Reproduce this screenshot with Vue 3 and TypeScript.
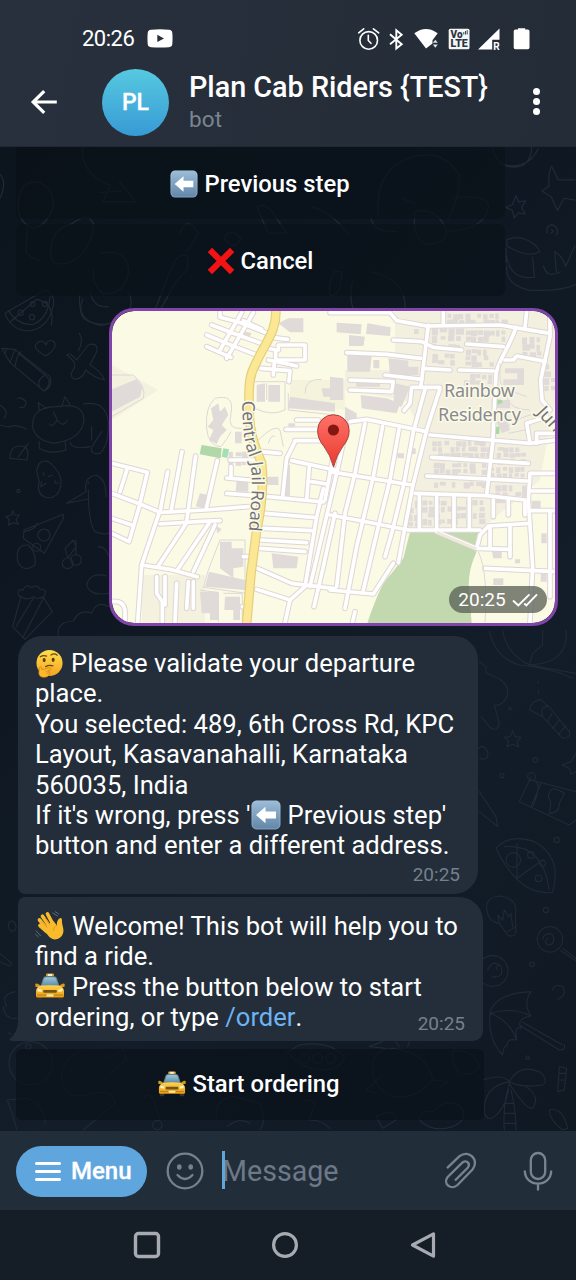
<script setup lang="ts">
interface Box { x: number; y: number; w: number; h: number }

// West half of the map, drawn at three units per pixel
const westRoads: string[] = [
  'M320 75L385 100L468 130', 'M305 105L375 134L455 165', 'M305 140L378 172', 'M345 38V52L400 66L495 103',
  'M445 38L365 175', 'M410 38L345 150', 'M415 62L470 88',
  'M470 140L512 150V180H600V135H520V150', 'M500 112L548 118', 'M468 205L555 212L552 245M490 180L575 198M508 188L505 225',
  'M20 490L127 517L105 610', 'M67 505L45 575', 'M20 580L105 612L165 637L300 630L430 620', 'M105 612L72 725L20 700',
  'M20 655L80 675', 'M162 640L110 795L98 968', 'M110 795L195 808L277 830', 'M345 662L290 664L165 672', 'M188 515L165 635',
  'M231 455L198 635', 'M272 468L245 665', 'M337 482L303 628', 'M247 665L158 800', 'M312 670L217 810', 'M330 675L265 815',
  'M375 480H470', 'M365 534L435 540', 'M365 580L490 590L655 606', 'M470 455L525 460', 'M575 360H640', 'M543 388H640',
  'M570 425L545 475L533 590', 'M570 422H650', 'M560 482L690 510', 'M613 500L605 598', 'M620 545L665 552', 'M690 440L660 600',
  'M480 640L625 652', 'M475 685L620 692', 'M468 720L605 728', 'M465 745L600 755', 'M458 805L560 850L690 866', 'M455 868L555 900',
  'M655 566L635 650L600 860L555 900L540 968', 'M690 640L655 800L627 920', 'M155 830V880L172 905V965', 'M180 830V915', 'M215 850L210 965',
  'M250 845L245 925', 'M265 845V925', 'M378 500V530', 'M415 770H430', 'M412 920H425', 'M20 905Q55 900 60 930V968',
]
// East half of the map
const eastRoads: string[] = [
  'M0 38H180L200 62L290 78L510 75L660 100', 'M340 35V70', 'M295 75L275 240', 'M558 82C535 150 510 170 498 220L488 430L470 585',
  'M190 120L275 125L310 142L395 150', 'M50 158L170 163L272 175', 'M280 205L360 210', 'M410 132L520 140', 'M388 210L490 213',
  'M165 225L275 238L272 262', 'M60 240L190 245L185 275L60 270', 'M590 35L585 80', 'M660 50V110L632 240L636 300L660 330',
  'M525 180H550L560 168L645 184', 'M222 332L240 310L245 262H330', 'M285 268L250 395',
  'M330 265L290 390L248 560L205 788', 'M60 365L110 358L290 395', 'M50 380L20 520L-60 860', 'M105 370L75 520L45 640L20 860',
  'M158 378L130 530L80 740L45 925', 'M207 388L180 540L145 680L100 870', 'M250 395L222 550L185 700L165 770',
  'M0 515L245 555', 'M0 645L80 660L235 690', 'M235 690H450', 'M0 870L130 882L190 790', 'M300 405L480 420L600 430L680 420',
  'M305 472L595 490', 'M290 528L590 543', 'M255 580L470 587L585 600V645', 'M268 585V685', 'M320 590V685', 'M372 590V685', 'M418 592V685',
  'M490 600V650', 'M535 600V645', 'M320 695L440 745L540 748', 'M440 745L450 705L475 678L600 670', 'M540 680V770', 'M480 680V740',
  'M600 430L595 400L590 370L650 350', 'M680 520H600L595 600L608 800L600 968', 'M600 573H680', 'M600 632H680', 'M465 805L680 815', 'M660 635V890',
  'M620 430V400H680', 'M75 935L68 965',
]
const westBlocks: string[] = [
  'M20 268L95 238L112 262L105 290L20 335Z', 'M550 55H595V97H555L520 70Z', 'M405 90L440 100L428 118L402 108Z', 'M455 255L480 250V305H455Z', 'M490 255H525V305H490Z',
  'M555 290L690 310V335L550 325Z', 'M345 725H380V745H415V800L385 805V835L345 805Z', 'M312 815L420 840V870L300 860Z', 'M285 875H340V960H315V940H290Z', 'M360 890H405V960H385V930H358Z',
  'M500 760L580 770L575 805H505Z', 'M285 580L310 585L295 625L272 618Z', 'M395 540H430V575H392Z', 'M318 325L340 310L345 335L360 320L370 345L350 375L365 390L345 410L335 432L312 420L325 390L308 380L325 360Z',
  'M390 395H410V430H390Z', 'M650 265H690V290H655Z', 'M330 675L350 688L338 700Z', 'M535 495H555V590H540Z', 'M455 530H520V555H460Z', 'M550 370H570V380H550Z',
]
const eastBlocks: string[] = [
  'M20 68L95 73L92 103L20 97Z', 'M112 70L182 82L180 108L108 102Z', 'M57 105L105 110L100 138H57Z', 'M52 165L125 168L120 215H52Z',
  'M130 180H148V205H130Z', 'M175 175L235 182V200H265V225H180Z', 'M0 230L40 235V300H0Z', 'M75 240L150 245V260H80Z', 'M92 285L170 295L210 310L200 340L95 325Z',
  'M195 250L240 260L215 320L190 315Z', 'M45 320L80 340V365H45Z', 'M525 205H582V255H520V238H562V220H525Z', 'M495 590H525V610H495Z',
  'M605 602H632V628H605Z', 'M634 700H650V730H634Z', 'M485 750H515V775H490Z', 'M555 778H570V790H555Z', 'M632 822H650V845H632Z', 'M490 835H520V855H490Z',
  'M200 460H222V475H203Z', 'M243 445H257V462H243Z', 'M252 88H266V102H252Z', 'M500 365L530 360L540 390L515 400Z', 'M485 300H540V325H485Z',
]

function scatter(seed: number, area: Box, step: number): Box[] {
  let s = seed * 7919
  const next = (): number => { s = (s * 16807) % 2147483647; return s / 2147483647 }
  const out: Box[] = []
  for (let y = area.y; y < area.y + area.h; y += step) {
    for (let x = area.x; x < area.x + area.w; x += step) {
      if (next() < 0.12) continue
      out.push({ x: x + next() * 3, y: y + next() * 3, w: 10 + next() * (step - 9), h: 10 + next() * (step - 9) })
    }
  }
  return out
}
const houses: Box[] = [
  ...scatter(11, { x: 305, y: 84, w: 85, h: 50 }, 24), ...scatter(37, { x: 405, y: 90, w: 120, h: 36 }, 18),
  ...scatter(71, { x: 405, y: 148, w: 90, h: 54 }, 18), ...scatter(15, { x: 305, y: 160, w: 55, h: 36 }, 18),
  ...scatter(92, { x: 305, y: 422, w: 170, h: 40 }, 18), ...scatter(19, { x: 310, y: 488, w: 150, h: 34 }, 18),
  ...scatter(57, { x: 500, y: 440, w: 85, h: 40 }, 18), ...scatter(83, { x: 310, y: 545, w: 150, h: 18 }, 18),
  ...scatter(29, { x: 275, y: 600, w: 180, h: 74 }, 19), ...scatter(61, { x: 480, y: 500, w: 100, h: 34 }, 18),
  ...scatter(43, { x: 350, y: 40, w: 170, h: 22 }, 18), ...scatter(67, { x: 575, y: 110, w: 60, h: 50 }, 22),
  ...scatter(81, { x: 400, y: 222, w: 82, h: 20 }, 18), ...scatter(13, { x: 495, y: 555, w: 85, h: 30 }, 20),
  ...scatter(31, { x: 640, y: 190, w: 30, h: 70 }, 22), ...scatter(97, { x: 230, y: 600, w: 25, h: 70 }, 22),
]
const campus: Box[] = scatter(5, { x: 370, y: 455, w: 60, h: 40 }, 20)

const menuLines: number[] = [1, 2, 3]
</script>

<template>
  <div class="phone">
    <svg class="defs" width="0" height="0" aria-hidden="true">
      <defs>
        <linearGradient id="gKey" x1="0" y1="0" x2="0" y2="1"><stop offset="0" stop-color="#9dbdd7" /><stop offset="1" stop-color="#6285a8" /></linearGradient>
        <linearGradient id="gFace" x1="0" y1="0" x2="0" y2="1"><stop offset="0" stop-color="#fee04a" /><stop offset="1" stop-color="#f6a420" /></linearGradient>
        <linearGradient id="gCab" x1="0" y1="0" x2="0" y2="1"><stop offset="0" stop-color="#ffd44c" /><stop offset="1" stop-color="#e89c0c" /></linearGradient>
        <linearGradient id="gGlass" x1="0" y1="0" x2="0" y2="1"><stop offset="0" stop-color="#9fc4d6" /><stop offset="1" stop-color="#568ba9" /></linearGradient>
        <linearGradient id="gPin" x1="0" y1="0" x2="0" y2="1"><stop offset="0" stop-color="#ff7268" /><stop offset="1" stop-color="#e9392f" /></linearGradient>
        <symbol id="eLeft" viewBox="0 0 30 30">
          <rect x=".5" y=".5" width="29" height="29" rx="5" fill="url(#gKey)" />
          <rect x="1.2" y="1.2" width="27.6" height="27.6" rx="4.5" fill="none" stroke="#adc7dc" stroke-opacity=".35" />
          <path d="M5 15L14.5 6.7V11.5H25V18.5H14.5V23.3Z" fill="#fff" />
        </symbol>
        <symbol id="eCross" viewBox="0 0 30 30"><path d="M.8 5.6L5.4 .8L15 10.4L24.6 .8L29.2 5.6L19.6 15L29.2 24.4L24.6 29.2L15 19.6L5.4 29.2L.8 24.4L10.4 15Z" fill="#f21414" /></symbol>
        <symbol id="eThink" viewBox="0 0 30 30">
          <circle cx="15" cy="14.5" r="13.5" fill="url(#gFace)" />
          <ellipse cx="9.5" cy="11.4" rx="1.6" ry="2.2" fill="#5c3a12" /><ellipse cx="18.8" cy="11.2" rx="1.6" ry="2.2" fill="#5c3a12" />
          <path d="M5.5 8Q8.5 6 12 7.3M16.5 6.2Q20 4 23 6.4M11 18.2Q15 16.3 18.5 17.5" fill="none" stroke="#6b4213" stroke-width="1.3" stroke-linecap="round" />
          <path d="M4.5 19.5C5 17.8 6.8 18 6.8 20L7 21.5L14.5 19.5C17 19 17.5 21 15.5 21.8L13.5 22.5C16 23 15.5 28 11.5 29C7 30.2 3.5 28 4 24Z" fill="#fbb92b" stroke="#c97c16" stroke-width=".7" />
          <path d="M14 22.3L11 23.5M14.5 24.5L11.5 25.2" stroke="#c97c16" stroke-width=".7" />
        </symbol>
        <symbol id="eWave" viewBox="0 0 30 30">
          <g fill="none" stroke="#f9bb2b" stroke-width="3.7" stroke-linecap="round"><path d="M15 16L7.5 5.3" /><path d="M18 13.5L12.5 3" /><path d="M12.5 18L4.5 9" /><path d="M11.8 20.5L5 14.5" /></g>
          <path d="M9.5 16L18.2 9.8L22 14.5C21.5 11.5 22.5 8.2 25.2 7C27.2 6.8 27 9 27 11C27 14 29.5 18.5 28 22.5C26.5 27 21.5 29.5 17.5 28C13 26 10 20.5 9.5 16Z" fill="#f9bb2b" />
          <path d="M15 14L10 6.8M12.2 16.5L6.5 9.8M22 14.5C19 15.5 18 18 19 20" fill="none" stroke="#dd8f1a" stroke-width=".8" />
          <path d="M17.5 1.8L22.8 5.2M20 .5L24 3.2M.8 19.5L5.8 25M.3 23L3.5 26" fill="none" stroke="#687886" stroke-width=".8" />
        </symbol>
        <symbol id="eCab" viewBox="0 0 30 30">
          <rect x="11" y="1.5" width="8" height="3" rx="1" fill="#d5a23c" /><rect x="13" y="2" width="4" height="2" fill="#f4eedb" />
          <rect x="1.8" y="22" width="5" height="6.2" rx="1.5" fill="#30343a" /><rect x="23.2" y="22" width="5" height="6.2" rx="1.5" fill="#30343a" />
          <path d="M5.6 14L8 6.2Q8.5 4.2 11 4.2H19Q21.5 4.2 22 6.2L24.4 14Z" fill="#5f7f8c" />
          <path d="M6.8 14L9 6.8Q9.4 5.3 11 5.3H19Q20.6 5.3 21 6.8L23.2 14Z" fill="url(#gGlass)" />
          <path d="M.2 12.8Q.3 11.4 2 11.6L5 13L4.5 15L.6 14.9ZM29.8 12.8Q29.7 11.4 28 11.6L25 13L25.5 15L29.4 14.9Z" fill="#d89819" />
          <path d="M5.5 13.6Q15 12.8 24.5 13.6Q28.8 15.5 29 19V24Q29 25.5 27.4 25.5H2.6Q1 25.5 1 24V19Q1.2 15.5 5.5 13.6Z" fill="url(#gCab)" />
          <rect x="8.2" y="18" width="13.6" height="2.8" rx="1" fill="#765219" /><path d="M2.6 16.6L6.8 17.8V20L2.6 19.2ZM27.4 16.6L23.2 17.8V20L27.4 19.2Z" fill="#f8f1d3" />
          <path d="M2 23H28" stroke="#a8731f" stroke-width=".8" /><rect x="11.5" y="22.2" width="7" height="2.2" rx=".5" fill="#fae8a4" />
        </symbol>
      </defs>
    </svg>

    <header class="header">
      <div class="status">
        <span class="clock">20:26</span>
        <svg class="yt" width="26" height="19" viewBox="0 0 26 19"><path d="M4 .8Q13 -.2 22 .8Q25.2 1.2 25.3 4Q25.8 9.5 25.3 15Q25.2 17.8 22 18.2Q13 19 4 18.2Q.8 17.8 .7 15Q.2 9.5 .7 4Q.8 1.2 4 .8Z" fill="#fff" /><path d="M10.3 5.8L17 9.4L10.3 13Z" fill="#28303c" /></svg>
        <svg class="tray" width="174" height="26" viewBox="0 0 174 26">
          <g fill="none" stroke="#fff" stroke-width="1.6" stroke-linecap="round"><circle cx="11.7" cy="14.4" r="8.8" /><path d="M11.3 9.3V14.5L14 17.3" /><path d="M1.7 6.8L6.7 2.8M16.4 2.8L21.7 6.8" /></g>
          <path d="M33 8.3L44.7 18.3L39.3 22.5V4.2L44.7 8.7L33 18.3" fill="none" stroke="#fff" stroke-width="1.9" stroke-linejoin="miter" />
          <path d="M57.3 7.3Q69 -1.2 80.7 7.3L75.5 14.3V17.5L69 22.4Z" fill="#fff" /><path d="M75.8 16.8L78.3 13.8L80.8 16.8ZM75.8 18.6L78.3 21.7L80.8 18.6Z" fill="#dfe3e8" />
          <rect x="91.7" y="2.8" width="20.8" height="20.4" rx="1.5" fill="#f3f5f7" />
          <text x="93.5" y="12" class="volte" textLength="12" lengthAdjust="spacingAndGlyphs">Vo</text><path d="M106.8 8.5V6M108.5 8.5V5M110.2 8.5V4.2" stroke="#2b3440" stroke-width=".9" /><text x="93.5" y="21.4" class="volte" textLength="17.2" lengthAdjust="spacingAndGlyphs">LTE</text>
          <path d="M121 23.4L142.5 2.6V13.7H135.2V23.4Z" fill="#fff" /><text x="136.2" y="23.5" class="roam">R</text>
          <path d="M161.3 2.2H168.5V3.5H171Q172.8 3.5 172.8 5.2V21.6Q172.8 23.2 171 23.2H158.8Q157 23.2 157 21.6V5.2Q157 3.5 158.8 3.5H161.3Z" transform="translate(-.3)" fill="#fff" />
        </svg>
      </div>
      <div class="titlebar">
        <svg class="back" width="28" height="26" viewBox="0 0 28 26"><path d="M26.8 13H2.8M14.2 2.2L3.2 13L14.2 23.8" fill="none" stroke="#fff" stroke-width="3.2" /></svg>
        <div class="avatar">PL</div>
        <div class="names"><div class="name">Plan Cab Riders {TEST}</div><div class="sub">bot</div></div>
        <div class="dots"><i v-for="n in menuLines" :key="n"></i></div>
      </div>
    </header>

    <main class="chat">
      <svg class="wallpaper" width="576" height="984" viewBox="0 147 576 984">
        <g class="doodle" transform="translate(0 290) scale(.3333)">
          <path d="M15 70L135 0Q170 15 158 55Q140 120 80 123Q30 115 15 70ZM25 62Q55 108 100 103Q145 85 150 20" /><circle cx="62" cy="68" r="8" /><circle cx="96" cy="82" r="8" /><circle cx="98" cy="42" r="7" /><circle cx="135" cy="42" r="8" />
          <path d="M5 175L45 178L150 260Q160 290 132 303L30 218ZM45 178L30 218M20 175L15 190M55 190L135 255Q110 270 118 287M63 185Q50 195 45 230M135 255Q160 275 135 300" />
          <path d="M137 198Q95 175 110 160Q130 145 138 165Q145 145 162 155Q175 175 137 198ZM240 10Q230 80 280 100Q305 112 325 100M270 5Q280 55 325 50M238 130Q252 150 235 182" />
          <path d="M200 195Q210 185 230 210L265 165Q295 155 290 185L270 225Q300 240 314 270Q285 265 257 240Q250 265 225 268Q205 260 220 238Q235 220 200 195Z" />
          <path d="M60 352Q80 355 78 335Q65 320 52 325M98 410Q95 350 170 350Q250 335 252 390Q245 450 160 460Q105 450 98 410ZM118 362L115 338L140 356M185 350L195 320L210 345M160 365L172 390Q155 415 148 402M172 390Q190 415 202 390M118 455V475Q150 495 198 480L195 455M250 342Q320 330 325 400Q325 470 300 490Q270 495 275 472L305 425M210 458Q220 480 270 470M275 410V450" />
          <path d="M30 505Q30 460 75 470Q90 485 80 510ZM55 500L85 460M0 345Q30 365 12 385M0 405Q30 415 40 407Q70 410 78 418" />
          <path d="M110 545Q115 505 145 515Q190 550 182 590Q172 630 135 622Q108 610 118 575ZM125 575L122 590L138 580M130 548L132 558M157 555L145 560M165 572Q165 588 175 577" />
          <path d="M200 640L258 605Q250 560 290 555Q320 570 318 620M200 640L265 627M265 600Q265 700 285 725Q310 735 327 730M265 575V580M38 662L43 675L58 675L48 688L55 703L39 698L25 706L28 690L18 680L34 675ZM190 673L72 720L70 745L133 790L190 685ZM72 725Q105 720 112 700M82 765Q45 765 53 815Q70 850 105 825Q110 790 85 765" /><circle cx="132" cy="735" r="18" /><circle cx="110" cy="772" r="12" /><circle cx="55" cy="603" r="5" />
          <circle cx="203" cy="820" r="16" /><circle cx="228" cy="810" r="16" /><path d="M203 802L195 775L220 750L228 770L205 802M228 750V795M295 770Q315 770 325 795M325 910Q270 920 260 885Q270 845 320 858M55 915Q50 895 70 900Q75 880 95 893Q110 880 120 898Q145 895 132 920Q110 930 100 920Q80 935 55 915ZM62 922L38 1010L75 1048L157 965L130 922M100 925L48 1010M130 925L70 1040M175 1035Q170 995 220 993Q240 955 275 970Q290 930 325 950" />
        </g>
        <g class="doodle" transform="translate(0 145) scale(.3673)">
          <path d="M1375 55Q1440 65 1465 10M1340 5Q1350 60 1400 60Q1445 60 1448 5M1502 58L1520 95H1565M1502 58Q1492 75 1495 112L1475 125L1500 140L1518 178L1535 145L1565 150M1405 138L1412 155L1431 152L1420 170L1430 188L1412 185L1400 198L1395 178L1377 170L1395 162ZM1490 240Q1485 220 1502 217Q1525 225 1515 245M1500 240Q1510 235 1502 230M1380 258Q1420 240 1460 275L1470 290Q1440 310 1380 275ZM1378 280V320M1378 300Q1390 370 1455 360L1450 305M1380 330Q1375 380 1440 395Q1520 400 1568 380M1480 330Q1490 365 1525 345M1515 345L1510 290Q1530 300 1540 330L1565 275" />
          <path d="M50 155Q55 100 100 100Q150 115 145 170Q120 230 85 225Q45 205 50 155ZM225 5Q220 80 300 110L280 155L370 155L325 100M270 130L330 125M140 310Q130 230 195 215Q240 180 255 215Q250 290 190 320Q145 330 140 310ZM275 295Q350 280 350 345Q340 410 280 405Q250 380 255 340M75 230L70 290Q85 310 110 315M225 420Q200 490 290 488Q380 460 350 400M420 455L460 350L480 310Q520 280 510 340L480 370L430 460M490 240Q510 190 540 240L510 290M620 240Q640 230 655 255Q640 290 610 255ZM1030 190Q1020 80 1100 40Q1200 0 1250 80Q1255 140 1220 200M1010 200Q1020 240 1080 235M1130 180Q1120 250 1160 270Q1220 270 1215 230Q1190 170 1130 180ZM1230 145Q1330 130 1330 170Q1320 230 1220 235M1095 145L1130 160M700 170L730 240L780 240L740 180Q715 155 700 170ZM850 170Q900 180 950 245M910 345Q890 390 900 410Q930 410 930 345ZM960 370Q940 450 1000 490M1010 345Q1120 370 1100 470M0 80Q20 100 0 145M30 480L100 420Q150 430 140 490" />
        </g>
        <g class="doodle" transform="translate(286 630) scale(.3333)">
          <path d="M610 5Q630 85 700 105Q800 115 860 145M650 0Q660 70 730 105M730 105Q850 100 840 0M770 0V45L740 70L730 105L870 130M580 95L600 110V130Q670 150 665 195Q650 230 625 225L640 280Q635 305 615 295L585 260M765 208Q730 215 732 240L770 260Q760 230 785 230ZM770 260L830 325Q855 325 850 305L785 225M798 250L785 275M820 270L800 295M840 288L820 310M680 302L687 320L705 322L693 335L698 350L680 343L663 350L668 332L655 322L673 320ZM580 385Q610 395 605 365Q590 340 578 355M757 155V160M757 180V190M870 370L855 395L828 405L850 415L855 433L870 425M700 515L735 440M700 515L850 585L870 570M735 450L870 485M735 450Q775 450 740 530M765 460L735 530M795 480Q780 500 795 515L790 550Q820 550 820 520L835 490Q805 470 795 480ZM580 485L630 560L635 590L580 545M630 655Q670 610 745 635Q830 680 800 787Q700 800 630 655ZM655 650Q770 640 790 780M693 640V745L770 690" /><circle cx="682" cy="690" r="22" /><circle cx="737" cy="440" r="12" /><circle cx="648" cy="437" r="6" /><circle cx="748" cy="390" r="7" /><circle cx="812" cy="630" r="8" /><circle cx="735" cy="675" r="10" /><circle cx="770" cy="700" r="9" /><circle cx="758" cy="745" r="10" /><circle cx="672" cy="236" r="4" />
        </g>
        <g class="doodle" transform="translate(286 890) scale(.3333)">
          <path d="M605 70Q590 20 645 18Q700 30 688 75L690 125Q685 145 665 135L640 100Q610 95 605 70ZM640 100L635 75L650 90L655 60L668 80L675 70L680 110M665 125L690 110M770 148Q775 125 800 133Q810 160 790 165Q770 160 785 145M830 175L870 205M825 182L870 212M605 240Q620 205 645 230Q655 265 620 260M635 240Q625 230 640 225M800 300Q805 280 830 290Q845 315 815 328M735 305Q625 310 612 370Q605 450 650 495Q650 470 665 465Q660 445 692 450Q685 405 705 415Q690 385 735 378Q710 340 735 305ZM735 378Q680 350 612 370Q670 390 692 450M700 405L820 480Q840 480 835 465M710 397L830 465M670 575Q650 550 590 570M670 575Q700 520 760 545Q790 570 770 585Q710 595 670 575ZM670 575Q590 590 595 670Q605 695 625 680Q665 650 670 575ZM670 580Q720 660 740 655Q765 620 720 590M665 600Q650 660 655 720M675 600Q690 660 690 720M655 640H685M655 670H688M655 700H690M820 530L842 535L835 600L815 605ZM818 550H840M818 570H838M790 660Q830 650 845 715L830 720Q790 690 790 660ZM0 490L40 465Q130 450 175 500Q170 540 100 540Q30 530 10 490M260 530Q260 480 320 475Q430 490 440 570Q390 630 320 620Q255 590 260 530ZM300 475L250 470L290 455M340 470L330 455M365 470L370 455M440 570L485 575L460 595M285 560L240 600L270 610M500 480Q570 480 580 530Q560 560 520 550Q495 520 500 480ZM400 690Q400 660 440 665Q480 620 525 650Q550 690 500 710Q440 730 400 690ZM270 680Q330 650 330 690L290 715ZM50 630Q100 630 80 660L70 690Q110 690 130 715" /><circle cx="792" cy="148" r="38" /><circle cx="620" cy="243" r="46" /><circle cx="780" cy="60" r="8" /><circle cx="738" cy="223" r="7" /><circle cx="725" cy="503" r="5" /><circle cx="55" cy="505" r="15" /><circle cx="95" cy="505" r="15" /><circle cx="135" cy="505" r="15" />
        </g>
        <g class="doodle" transform="translate(0 890) scale(.3333)">
          <circle cx="92" cy="520" r="65" /><path d="M25 100Q35 85 45 100Q55 120 35 125Q25 120 25 100ZM0 190L35 220Q35 235 0 215M20 350Q5 320 30 310L45 305M10 350Q15 390 50 385M25 430Q30 425 33 435M22 630L80 625Q130 640 135 700M22 630Q40 680 50 718M185 570Q185 500 250 480M185 570Q190 630 260 615Q340 590 345 640L250 720M300 510L370 480L380 510L330 550M430 625Q450 600 465 640L480 690M650 680Q640 630 700 620L780 640Q800 700 780 718M680 710Q720 680 750 700" /><circle cx="85" cy="470" r="8" /><circle cx="472" cy="705" r="14" />
        </g>
      </svg>

      <div class="keys">
        <div class="key"><svg class="kico" width="28" height="28"><use href="#eLeft" /></svg><span>Previous step</span></div>
        <div class="key second"><svg class="kico" width="28" height="30"><use href="#eCross" /></svg><span>Cancel</span></div>
      </div>

      <div class="place">
        <svg class="map" viewBox="112 311 443 312" width="443" height="312">
          <rect x="112" y="311" width="443" height="312" fill="#fbfae5" />
          <path d="M395 310H555V400L540 480L480 530H405L425 440L405 400L345 390V370H395Z" fill="#f4f0df" />
          <path d="M290 380H345V410L290 405Z" fill="#f6f3dd" />
          <path d="M142 575H205V623H142Z" fill="#f4f2de" />
          <path d="M112 365L158 390L112 420Z" fill="#f4f1df" />
          <g transform="translate(105 300) scale(.33333)">
            <path v-for="d in westBlocks" :key="d" :d="d" class="block" />
            <rect v-for="(b, i) in campus" :key="i" :x="b.x" :y="b.y" :width="b.w" :height="b.h" class="block" />
            <g class="outline"><path d="M20 225L85 225Q125 260 115 295L20 350" /><path d="M305 385Q300 320 330 295Q390 280 378 340Q365 390 410 385M378 395Q365 420 348 440Q310 440 305 385" /><path d="M445 245H540V330Q500 350 450 325M485 250V300" /><path d="M550 280V330L690 345M600 280Q600 235 650 238" /><path d="M345 720H420V830L425 880L295 862L310 810Z" /><path d="M285 870L340 878V965M355 880H412V965" /><path d="M460 420Q510 370 525 390L535 440M490 430Q500 400 510 410" /></g>
            <path d="M290 435L350 445L347 475L284 463Z" fill="#b1d8a8" /><path d="M355 445L372 448L367 474L350 470Z" fill="#a4dfb5" />
            <path v-for="d in westRoads" :key="'c' + d" :d="d" class="casing" />
          </g>
          <g transform="translate(330 300) scale(.33333)">
            <path v-for="d in eastBlocks" :key="d" :d="d" class="block" />
            <rect v-for="(b, i) in houses" :key="i" :x="b.x" :y="b.y" :width="b.w" :height="b.h" class="block" />
            <path d="M240 697H445L438 760Q410 820 418 880L425 970H112C140 890 155 850 185 820L220 775Z" fill="#c2d8ae" />
            <path d="M495 302Q515 292 518 308L500 315ZM492 380H508V402H492Z" fill="#a5dba0" />
            <path v-for="d in eastRoads" :key="'c' + d" :d="d" class="casing" />
            <path v-for="d in eastRoads" :key="'f' + d" :d="d" class="road" />
            <g class="outline"><path d="M445 755Q475 820 465 968M510 190V240Q515 270 550 275L590 290M530 290Q540 330 600 330M530 380Q570 350 620 340M535 400L585 390" /></g>
            <path d="M320 697L440 747" fill="none" stroke="#eee9da" stroke-width="8" />
          </g>
          <g transform="translate(105 300) scale(.33333)">
            <path v-for="d in westRoads" :key="'f' + d" :d="d" class="road" />
            <path class="main-case" d="M512 25C518 90 480 130 455 185C430 230 432 260 432 320C432 400 450 440 470 490C478 560 470 620 455 690L438 820L425 970" />
            <path class="main-fill" d="M512 25C518 90 480 130 455 185C430 230 432 260 432 320C432 400 450 440 470 490C478 560 470 620 455 690L438 820L425 970" />
            <path id="streetPath" d="M412 302C412 390 418 430 433 470C442 510 442 560 438 610L430 710" fill="none" />
            <text class="street"><textPath href="#streetPath" textLength="394">Central Jail Road</textPath></text>
          </g>
          <text class="area" x="444" y="397" textLength="71">Rainbow</text>
          <text class="area" x="438" y="421" textLength="83">Residency</text>
          <text class="area jun" transform="translate(536 413) rotate(47)">Jun</text>
          <path d="M333.5 467Q330.5 455 324 446.5Q317.6 439 317.6 430.5A15.7 15.7 0 0 1 349.2 430.5Q349.2 439 342.8 446.5Q336.5 455 333.5 467Z" fill="url(#gPin)" stroke="#a2362f" stroke-width=".9" />
          <circle cx="333.4" cy="430" r="5.6" fill="#821811" />
        </svg>
        <div class="seen">20:25<svg width="26" height="16" viewBox="0 0 26 16"><path d="M1 8.5L6.3 13.5L17.5 2.3M12.3 11.5L14.4 13.5L25 2.3" fill="none" stroke="#fff" stroke-width="1.9" /></svg></div>
      </div>

      <section class="bubble first">
        <div class="line"><svg class="emo" width="29" height="29"><use href="#eThink" /></svg><span>Please validate your departure</span></div>
        <div class="line">place.</div>
        <div class="line">You selected: 489, 6th Cross Rd, KPC</div>
        <div class="line">Layout, Kasavanahalli, Karnataka</div>
        <div class="line">560035, India</div>
        <div class="line">If it's wrong, press '<svg class="emo" width="30" height="30"><use href="#eLeft" /></svg><span>Previous step'</span></div>
        <div class="line">button and enter a different address.</div>
        <time>20:25</time>
      </section>

      <section class="bubble last">
        <div class="line"><svg class="emo" width="30" height="30"><use href="#eWave" /></svg><span>Welcome! This bot will help you to</span></div>
        <div class="line">find a ride.</div>
        <div class="line"><svg class="emo" width="30" height="30"><use href="#eCab" /></svg><span>Press the button below to start</span></div>
        <div class="line">ordering, or type <a>/order</a>.</div>
        <time>20:25</time>
        <svg class="tail" width="12" height="22" viewBox="0 0 12 22"><path d="M9.5 0Q9 14 0 20.5Q1 22 6 22H12V0Z" fill="#232e3a" /></svg>
      </section>

      <div class="key start"><svg class="kico" width="28" height="28"><use href="#eCab" /></svg><span>Start ordering</span></div>
    </main>

    <footer class="composer">
      <div class="menu"><div class="bars"><i v-for="n in menuLines" :key="n"></i></div><span>Menu</span></div>
      <svg class="smile" width="38" height="38" viewBox="0 0 38 38"><circle cx="19" cy="19" r="17.3" fill="none" stroke="#74818f" stroke-width="2.3" /><ellipse cx="13.3" cy="15" rx="2.3" ry="2.8" fill="#74818f" /><ellipse cx="24.7" cy="15" rx="2.3" ry="2.8" fill="#74818f" /><path d="M11.5 23Q19 31 26.5 23" fill="none" stroke="#74818f" stroke-width="2.3" stroke-linecap="round" /></svg>
      <div class="field"><i class="caret"></i><span>Message</span></div>
      <svg class="clip" width="34" height="38" viewBox="0 0 34 38"><path d="M3 16.2L15.5 4.2C25 -3 36 8 28.5 17.5L13.5 33C7 39 -1.5 31.5 3.7 25L18.5 10.5C23 7.5 27 12 23.5 16L11 28.5" fill="none" stroke="#788490" stroke-width="2.3" /></svg>
      <svg class="mic" width="30" height="42" viewBox="0 0 30 42"><rect x="7.8" y="3" width="14.4" height="26" rx="7.2" fill="none" stroke="#788490" stroke-width="2.3" /><path d="M1.8 20.5C1.8 38 28.2 38 28.2 20.5M15 34V40.5" fill="none" stroke="#788490" stroke-width="2.3" /></svg>
    </footer>

    <nav class="system">
      <svg width="28" height="28" viewBox="0 0 28 28"><rect x="2.5" y="2.5" width="23" height="23" rx="3" fill="none" stroke="#a7abb1" stroke-width="3.4" /></svg>
      <svg width="28" height="28" viewBox="0 0 28 28"><circle cx="14" cy="14" r="11.4" fill="none" stroke="#a7abb1" stroke-width="3.2" /></svg>
      <svg width="28" height="28" viewBox="0 0 28 28"><path d="M24.5 2.8V25.2L3.5 14Z" fill="none" stroke="#a7abb1" stroke-width="3.2" stroke-linejoin="round" /></svg>
    </nav>
  </div>
</template>

<style>
body { background: #151d27; overflow: hidden; }
</style>

<style scoped>
.phone { width: 576px; height: 1280px; display: flex; flex-direction: column; overflow: hidden; font-family: Roboto, "Liberation Sans", sans-serif; color: #fff; }
.defs { position: absolute; }
svg { flex: none; display: block; }
.header { height: 147px; flex: none; box-sizing: border-box; background: linear-gradient(100deg, #28303d, #252d39 70%, #242c38); border-bottom: 1px solid #202833; }
.status { padding: 25px 45px 0 82px; display: flex; align-items: center; height: 27px; }
.clock { font-size: 22px; letter-spacing: -.5px; width: 64px; }
.yt { margin-left: 1px; }
.tray { margin-left: auto; }
.volte { font: 900 10px Roboto, sans-serif; fill: #2b3440; }
.roam { font: 700 10px Roboto, sans-serif; fill: #fff; }
.titlebar { display: flex; align-items: center; height: 67px; margin-top: 17px; padding-left: 30px; }
.back { margin-top: -1px; }
.avatar { width: 67px; height: 67px; border-radius: 50%; margin-left: 44px; background: linear-gradient(#57c9e0, #379ad5); display: flex; align-items: center; justify-content: center; font-size: 23px; font-weight: 500; -webkit-text-stroke: .3px #fff; }
.names { margin-left: 20px; width: 330px; height: 67px; white-space: nowrap; }
.name { font-size: 28.8px; font-weight: 500; line-height: 36px; letter-spacing: -.02px; }
.sub { font-size: 22.5px; line-height: 28px; color: #7b8592; letter-spacing: .2px; }
.dots { display: flex; flex-direction: column; gap: 2.7px; margin: -2px 0 0 14px; }
.dots i { width: 7px; height: 7px; border-radius: 50%; background: #fff; }

.chat { position: relative; height: 984px; flex: none; background: linear-gradient(135deg, #0c141d 0, #0f1822 35%, #121d29 65%, #101822 100%); }
.wallpaper { position: absolute; left: 0; top: 0; }
.doodle { fill: none; stroke: #1f2a36; stroke-width: 3.4; stroke-linecap: round; stroke-linejoin: round; }
.keys, .place, .bubble, .key { position: relative; }
.keys { width: 489px; margin-left: 16px; }
.key { height: 72px; background: rgba(9, 16, 25, .66); display: flex; align-items: center; justify-content: center; font-size: 23.8px; font-weight: 500; border-radius: 0 0 6px 6px; white-space: nowrap; box-sizing: border-box; padding-top: 2px; }
.second { margin-top: 5px; border-radius: 6px; }
.kico { margin-right: 6px; }
.key span { margin-right: 1px; }
.place { width: 443px; height: 312px; margin: 12px 0 0 109px; border: 3px solid #8144ab; border-radius: 25px; overflow: hidden; }
.map { border-radius: 22px; }
.block { fill: #e0dad8; }
.outline { fill: none; stroke: #ded7d6; stroke-width: 3; }
.casing { fill: none; stroke: #ded6d6; stroke-width: 17; stroke-linejoin: round; stroke-linecap: round; }
.road { fill: none; stroke: #fff; stroke-width: 11; stroke-linejoin: round; stroke-linecap: round; }
.main-case { fill: none; stroke: #e4ce7c; stroke-width: 29; }
.main-fill { fill: none; stroke: #fbe794; stroke-width: 22; }
.street { font: 52px "Noto Sans", sans-serif; fill: #74727c; stroke: #fbfae5; stroke-width: 9; paint-order: stroke; stroke-linejoin: round; }
.area { font: 18px "Noto Sans", sans-serif; fill: #8a8993; stroke: #fbfae5; stroke-width: 3; paint-order: stroke; stroke-linejoin: round; }
.jun { fill: #74727c; }
.seen { position: absolute; right: 8px; bottom: 10px; width: 98px; height: 27px; border-radius: 14px; background: rgba(88, 94, 84, .76); display: flex; align-items: center; justify-content: center; gap: 6px; font-size: 19px; }

.bubble { box-sizing: border-box; margin-left: 18px; background: #232e3a; font-size: 25.6px; line-height: 30.4px; white-space: nowrap; }
.first { width: 460px; height: 258px; margin-top: 10px; padding: 12px 17px; border-radius: 24px 24px 24px 7px; }
.last { width: 465px; height: 144px; margin-top: 3px; padding: 14px 17px; border-radius: 7px 24px 10px 0; }
.line { height: 30.4px; display: flex; align-items: center; white-space: pre; }
.emo { margin-right: 7px; }
.bubble a { color: #6cb3f3; }
.bubble time { position: absolute; right: 18px; bottom: 8px; font-size: 19px; line-height: 22px; color: #75808c; }
.bubble.last time { bottom: 6px; }
.tail { position: absolute; left: -9px; bottom: 0; }
.start { width: 468px; height: 71px; margin: 8px 0 0 16px; border-radius: 6px; padding: 0 1px 1px 0; }

.composer { height: 79px; flex: none; background: #222d3a; display: flex; align-items: center; padding-left: 16px; }
.menu { width: 131px; height: 51px; margin-top: 1px; border-radius: 26px; background: #5fa6de; display: flex; align-items: center; font-size: 24px; font-weight: 500; -webkit-text-stroke: .3px #fff; }
.bars { display: flex; flex-direction: column; gap: 5px; margin: 0 10px 0 19px; }
.bars i { width: 26px; height: 3px; border-radius: 2px; background: #fff; }
.smile { margin-left: 19px; }
.field { position: relative; margin-left: 18px; width: 217px; height: 39px; display: flex; align-items: center; font-size: 28.6px; color: #6d7987; }
.caret { position: absolute; left: 0; top: 0; width: 3px; height: 38px; background: #5fa6de; }
.clip { margin-left: 5px; }
.mic { margin-left: 45px; }
.system { height: 70px; flex: none; background: #151d27; display: flex; align-items: center; gap: 110px; padding-left: 133px; }
</style>
